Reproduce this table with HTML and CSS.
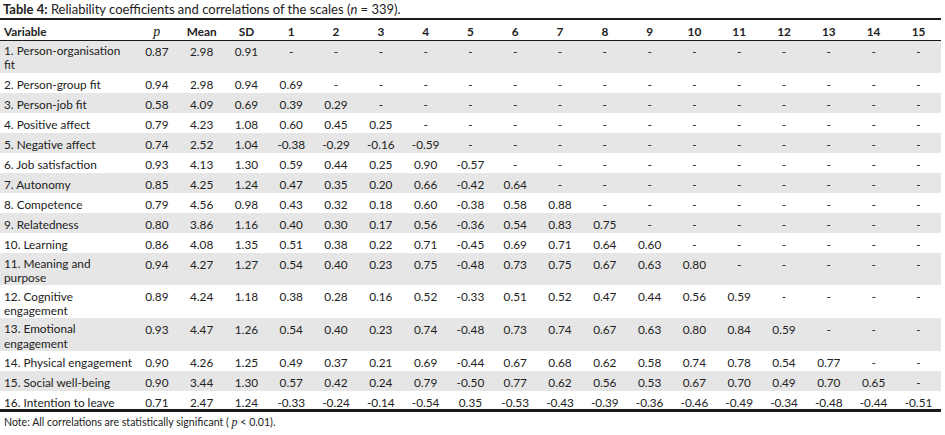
FILE: index.html
```html
<!DOCTYPE html>
<html lang="en">
<head>
<meta charset="utf-8">
<title>Table 4</title>
<link rel="stylesheet" href="styles.css">
</head>
<body>
<div class="page">
  <div class="title"><b>Table 4:</b> Reliability coefficients and correlations of the scales (<i>n</i> = 339).</div>
  <table class="data">
    <colgroup>
      <col class="c-var">
      <col span="18" class="c-num">
    </colgroup>
    <thead>
      <tr>
        <th class="var">Variable</th><th><i class="rho">p</i></th><th>Mean</th><th>SD</th>
        <th>1</th><th>2</th><th>3</th><th>4</th><th>5</th><th>6</th><th>7</th><th>8</th><th>9</th><th>10</th><th>11</th><th>12</th><th>13</th><th>14</th><th>15</th>
      </tr>
    </thead>
    <tbody>
      <tr><td class="var wrap">1. Person-organisation<br>fit</td><td>0.87</td><td>2.98</td><td>0.91</td><td>-</td><td>-</td><td>-</td><td>-</td><td>-</td><td>-</td><td>-</td><td>-</td><td>-</td><td>-</td><td>-</td><td>-</td><td>-</td><td>-</td><td>-</td></tr>
      <tr><td class="var">2. Person-group fit</td><td>0.94</td><td>2.98</td><td>0.94</td><td>0.69</td><td>-</td><td>-</td><td>-</td><td>-</td><td>-</td><td>-</td><td>-</td><td>-</td><td>-</td><td>-</td><td>-</td><td>-</td><td>-</td><td>-</td></tr>
      <tr><td class="var">3. Person-job fit</td><td>0.58</td><td>4.09</td><td>0.69</td><td>0.39</td><td>0.29</td><td>-</td><td>-</td><td>-</td><td>-</td><td>-</td><td>-</td><td>-</td><td>-</td><td>-</td><td>-</td><td>-</td><td>-</td><td>-</td></tr>
      <tr><td class="var">4. Positive affect</td><td>0.79</td><td>4.23</td><td>1.08</td><td>0.60</td><td>0.45</td><td>0.25</td><td>-</td><td>-</td><td>-</td><td>-</td><td>-</td><td>-</td><td>-</td><td>-</td><td>-</td><td>-</td><td>-</td><td>-</td></tr>
      <tr><td class="var">5. Negative affect</td><td>0.74</td><td>2.52</td><td>1.04</td><td>-0.38</td><td>-0.29</td><td>-0.16</td><td>-0.59</td><td>-</td><td>-</td><td>-</td><td>-</td><td>-</td><td>-</td><td>-</td><td>-</td><td>-</td><td>-</td><td>-</td></tr>
      <tr><td class="var">6. Job satisfaction</td><td>0.93</td><td>4.13</td><td>1.30</td><td>0.59</td><td>0.44</td><td>0.25</td><td>0.90</td><td>-0.57</td><td>-</td><td>-</td><td>-</td><td>-</td><td>-</td><td>-</td><td>-</td><td>-</td><td>-</td><td>-</td></tr>
      <tr><td class="var">7. Autonomy</td><td>0.85</td><td>4.25</td><td>1.24</td><td>0.47</td><td>0.35</td><td>0.20</td><td>0.66</td><td>-0.42</td><td>0.64</td><td>-</td><td>-</td><td>-</td><td>-</td><td>-</td><td>-</td><td>-</td><td>-</td><td>-</td></tr>
      <tr><td class="var">8. Competence</td><td>0.79</td><td>4.56</td><td>0.98</td><td>0.43</td><td>0.32</td><td>0.18</td><td>0.60</td><td>-0.38</td><td>0.58</td><td>0.88</td><td>-</td><td>-</td><td>-</td><td>-</td><td>-</td><td>-</td><td>-</td><td>-</td></tr>
      <tr><td class="var">9. Relatedness</td><td>0.80</td><td>3.86</td><td>1.16</td><td>0.40</td><td>0.30</td><td>0.17</td><td>0.56</td><td>-0.36</td><td>0.54</td><td>0.83</td><td>0.75</td><td>-</td><td>-</td><td>-</td><td>-</td><td>-</td><td>-</td><td>-</td></tr>
      <tr><td class="var">10. Learning</td><td>0.86</td><td>4.08</td><td>1.35</td><td>0.51</td><td>0.38</td><td>0.22</td><td>0.71</td><td>-0.45</td><td>0.69</td><td>0.71</td><td>0.64</td><td>0.60</td><td>-</td><td>-</td><td>-</td><td>-</td><td>-</td><td>-</td></tr>
      <tr><td class="var wrap">11. Meaning and<br>purpose</td><td>0.94</td><td>4.27</td><td>1.27</td><td>0.54</td><td>0.40</td><td>0.23</td><td>0.75</td><td>-0.48</td><td>0.73</td><td>0.75</td><td>0.67</td><td>0.63</td><td>0.80</td><td>-</td><td>-</td><td>-</td><td>-</td><td>-</td></tr>
      <tr><td class="var wrap">12. Cognitive<br>engagement</td><td>0.89</td><td>4.24</td><td>1.18</td><td>0.38</td><td>0.28</td><td>0.16</td><td>0.52</td><td>-0.33</td><td>0.51</td><td>0.52</td><td>0.47</td><td>0.44</td><td>0.56</td><td>0.59</td><td>-</td><td>-</td><td>-</td><td>-</td></tr>
      <tr><td class="var wrap">13. Emotional<br>engagement</td><td>0.93</td><td>4.47</td><td>1.26</td><td>0.54</td><td>0.40</td><td>0.23</td><td>0.74</td><td>-0.48</td><td>0.73</td><td>0.74</td><td>0.67</td><td>0.63</td><td>0.80</td><td>0.84</td><td>0.59</td><td>-</td><td>-</td><td>-</td></tr>
      <tr><td class="var">14. Physical engagement</td><td>0.90</td><td>4.26</td><td>1.25</td><td>0.49</td><td>0.37</td><td>0.21</td><td>0.69</td><td>-0.44</td><td>0.67</td><td>0.68</td><td>0.62</td><td>0.58</td><td>0.74</td><td>0.78</td><td>0.54</td><td>0.77</td><td>-</td><td>-</td></tr>
      <tr><td class="var">15. Social well-being</td><td>0.90</td><td>3.44</td><td>1.30</td><td>0.57</td><td>0.42</td><td>0.24</td><td>0.79</td><td>-0.50</td><td>0.77</td><td>0.62</td><td>0.56</td><td>0.53</td><td>0.67</td><td>0.70</td><td>0.49</td><td>0.70</td><td>0.65</td><td>-</td></tr>
      <tr><td class="var">16. Intention to leave</td><td>0.71</td><td>2.47</td><td>1.24</td><td>-0.33</td><td>-0.24</td><td>-0.14</td><td>-0.54</td><td>0.35</td><td>-0.53</td><td>-0.43</td><td>-0.39</td><td>-0.36</td><td>-0.46</td><td>-0.49</td><td>-0.34</td><td>-0.48</td><td>-0.44</td><td>-0.51</td></tr>
    </tbody>
  </table>
  <p class="note">Note: All correlations are statistically significant ( <i class="pv">p</i> &lt; 0.01).</p>
</div>
</body>
</html>
```

FILE: styles.css
```css
html, body {
  margin: 0;
  padding: 0;
  background: #ffffff;
}

.page {
  font-family: Lato, "Open Sans", sans-serif;
  color: #222222;
  width: 945px;
}

.title {
  font-size: 13px;
  line-height: 18px;
  height: 18px;
  padding-left: 3px;
  white-space: nowrap;
}

.title b {
  font-weight: 700;
}

.data {
  width: 941px;
  border-collapse: collapse;
  table-layout: fixed;
  font-size: 11.8px;
  line-height: 13px;
  border-bottom: 3px solid #1a1a1a;
}

.c-var {
  width: 133px;
}

.c-num {
  width: 44.33px;
}

.data thead tr {
  border-top: 2px solid #1a1a1a;
  border-bottom: 1px solid #1a1a1a;
}

.data th {
  font-weight: 700;
  text-align: center;
  padding: 5px 0 1.5px;
  vertical-align: top;
}

.data td {
  text-align: center;
  vertical-align: top;
  padding: 5px 0 2px;
}

.data th.var,
.data td.var {
  text-align: left;
  padding-left: 4px;
  padding-right: 0;
  white-space: nowrap;
}

.data td.wrap {
  line-height: 14.2px;
  padding-top: 4.4px;
  padding-bottom: 0;
}

.data tbody tr:first-child td {
  padding-top: 4.2px;
  padding-bottom: 0;
}

.data tbody tr:first-child td.wrap {
  padding-top: 3.6px;
}

.data tbody tr:last-child td {
  padding-bottom: 0;
}

.data tbody tr:nth-child(odd) {
  background: #e6e6e6;
}

.rho {
  font-family: "Liberation Serif", serif;
  font-style: italic;
  font-weight: 400;
  font-size: 14px;
  line-height: 13px;
}

.note {
  margin: 0;
  padding: 3px 0 0 4px;
  font-size: 10.6px;
  line-height: 14px;
}

.pv {
  font-family: "Liberation Serif", serif;
  font-size: 12px;
}
```
